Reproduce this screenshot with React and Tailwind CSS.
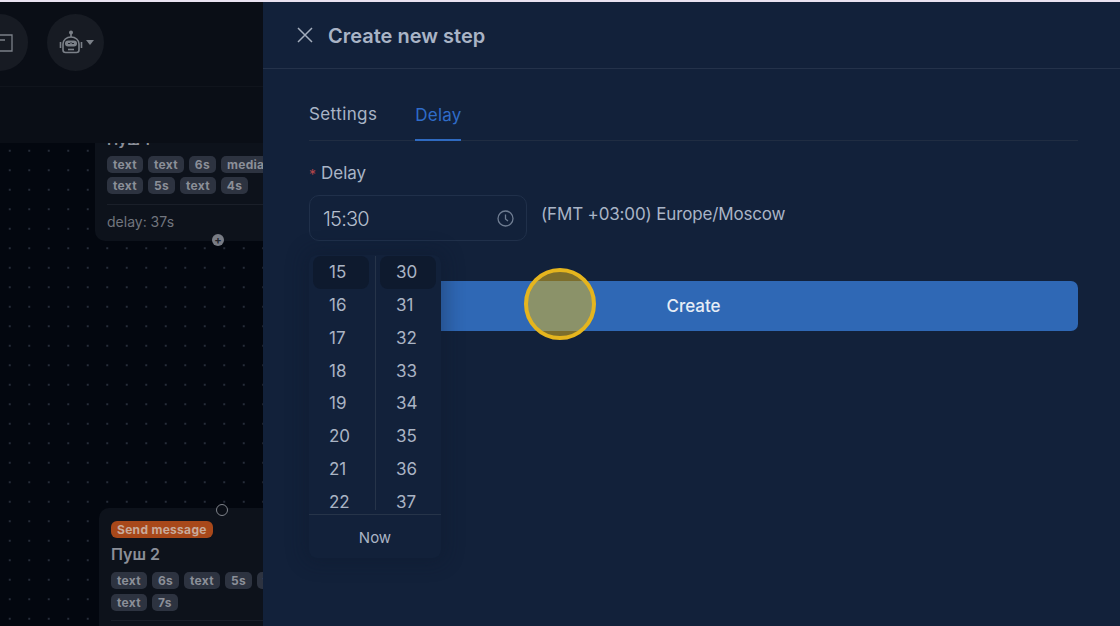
const hours = ['15', '16', '17', '18', '19', '20', '21', '22'];
const minutes = ['30', '31', '32', '33', '34', '35', '36', '37'];

const Tag = ({ children }) => (
  <span className="h-[17px] px-[6px] flex items-center rounded-[5px] bg-[#2d3340] text-[12px] font-bold tracking-[0.3px] text-[#8b8f98] whitespace-nowrap">
    {children}
  </span>
);

const RobotIcon = () => (
  <svg width="26" height="26" viewBox="0 0 26 26" fill="none" stroke="#7b8088" strokeWidth="1.6">
    <circle cx="13" cy="2.500" r="1.200" fill="#7b8088" />
    <path d="M13 4v3" />
    <path d="M5 14c0-4 3.500-7 8-7s8 3 8 7v6c0 1.500-1 2.500-2.500 2.500h-11C6 22.500 5 21.500 5 20z" />
    <path d="M2.500 12v6M23.500 12v6" />
    <rect x="7" y="10.500" width="12" height="6" rx="3" fill="#7b8088" stroke="none" />
    <path d="M10 13.500h2l1 -1 1 1h2" stroke="#20242d" strokeWidth="1" />
    <path d="M10 19.500h6" />
  </svg>
);

const Canvas = () => (
  <div className="w-[263px] shrink-0 relative overflow-hidden bg-[#03070f] flex flex-col">
    <div className="h-[85px] shrink-0 flex items-center gap-[19px] -ml-[28px] pb-[3px] bg-[#0a0e16] border-b border-[#10141c] relative z-10">
      <div className="w-[56px] h-[57px] rounded-full bg-[#171b23] flex items-center justify-end pr-[15px]">
        <svg width="13" height="18" viewBox="0 0 13 18" fill="none" stroke="#7b8088" strokeWidth="1.300">
          <path d="M-4 1h16v16H-4M-1 6h6" />
        </svg>
      </div>
      <div className="w-[57px] h-[57px] rounded-full bg-[#171b23] flex items-center justify-center gap-[2px]">
        <RobotIcon />
        <svg width="8" height="6" viewBox="0 0 8 6"><path d="M0 0h8L4 5z" fill="#7b8088" /></svg>
      </div>
    </div>
    <div className="h-[56px] shrink-0 bg-[#0a0e16] relative z-10" />
    <div className="flex-1 bg-[radial-gradient(circle,#262d3a_0.8px,transparent_1px)] bg-[size:19.500px_19.500px] bg-[position:0px_-2px]" />

    {/* nodes on the canvas */}
    <div className="absolute left-[95px] top-[119px] w-[200px] h-[120px] rounded-[10px] bg-[#0d121b] pl-[12px] pt-[9px]">
      <div className="text-[15px] font-semibold text-[#8b8f98] leading-[20px]">Пуш 1</div>
      <div className="flex gap-[5px] mt-[6px]">
        <Tag>text</Tag><Tag>text</Tag><Tag>6s</Tag><Tag>media</Tag>
      </div>
      <div className="flex gap-[5px] mt-[4px]">
        <Tag>text</Tag><Tag>5s</Tag><Tag>text</Tag><Tag>4s</Tag>
      </div>
      <div className="border-t border-[#1a1f29] mt-[10px] pt-[6px] text-[14px] text-[#71757e]">delay: 37s</div>
    </div>
    <div className="absolute left-[212px] top-[232px] w-[12px] h-[12px] rounded-full bg-[#787c85] flex items-center justify-center text-[11px] leading-none font-bold text-[#20242d]">+</div>

    <div className="absolute left-[99px] top-[506px] w-[200px] h-[130px] rounded-[10px] bg-[#0d121b] pl-[12px] pt-[13px]">
      <div className="w-fit h-[17px] px-[6px] rounded-[6px] bg-[#a8481a] text-[12px] leading-[17px] font-bold tracking-[0.3px] text-[#c9ab9c]">Send message</div>
      <div className="text-[16px] font-semibold text-[#8b8f98] leading-[20px] mt-[6px]">Пуш 2</div>
      <div className="flex gap-[5px] mt-[8px]">
        <Tag>text</Tag><Tag>6s</Tag><Tag>text</Tag><Tag>5s</Tag><Tag>text</Tag>
      </div>
      <div className="flex gap-[5px] mt-[5px]">
        <Tag>text</Tag><Tag>7s</Tag>
      </div>
      <div className="border-t border-[#1a1f29] mt-[9px]" />
    </div>
    <div className="absolute left-[216px] top-[502px] w-[12px] h-[12px] rounded-full border border-[#80848c] bg-[#0a0e16]" />
  </div>
);

const TimeColumn = ({ items, className }) => (
  <div className={`flex-1 h-[254px] overflow-hidden ${className}`}>
    {items.map((item, i) => (
      <div
        key={item}
        className={`h-[32.800px] shrink-0 flex items-center pl-[16px] pt-[1px] text-[17px] text-[#aab4c4] rounded-[8px] ${i === 0 ? 'bg-[#0e1a2e]' : ''}`}
      >
        {item}
      </div>
    ))}
  </div>
);

const TimePopup = () => (
  <div className="absolute left-[46px] top-[253px] w-[132px] h-[303px] rounded-[8px] bg-[#12213a] shadow-[0_0_18px_6px_rgba(12,24,44,0.3)] flex flex-col">
    <div className="flex pt-[1px] h-[259px]">
      <TimeColumn items={hours} className="pl-[4px] pr-[6px]" />
      <div className="w-px h-[254px] bg-[#263449] shrink-0" />
      <TimeColumn items={minutes} className="pl-[4px] pr-[5px]" />
    </div>
    <div className="flex-1 border-t border-[#263449] flex items-center justify-center pt-[4px] text-[15px] text-[#aab4c4]">Now</div>
  </div>
);

const Panel = () => (
  <div className="flex-1 relative bg-[#12213a] flex flex-col">
    <div className="h-[67px] shrink-0 flex items-center pl-[34px] border-b border-[#24324a]">
      <svg width="16" height="16" viewBox="0 0 16 16" stroke="#a3adbc" strokeWidth="1.500" fill="none">
        <path d="M1 1l14 14M15 1L1 15" />
      </svg>
      <h2 className="ml-[15px] pt-[2px] text-[20px] font-semibold text-[#a9b4c6]">Create new step</h2>
    </div>
    <div className="pl-[46px] pr-[42px]">
      <div className="flex gap-[38px] h-[72px] items-end border-b border-[#202d42]">
        <div className="h-[38px] text-[17px] tracking-[0.4px] text-[#a9b4c6]">Settings</div>
        <div className="h-[38px] -mb-px text-[17px] tracking-[0.2px] text-[#2f6cc8] border-b-2 border-[#2f6ac0]">Delay</div>
      </div>
      <div className="mt-[22px] h-[22px] flex items-center text-[17px] text-[#a9b4c6]">
        <span className="text-[#b5464a] text-[14px] mr-[5px]">*</span>Delay
      </div>
      <div className="flex mt-[10px]">
        <div className="w-[218px] h-[46px] rounded-[10px] border border-[#20304a] flex items-center justify-between pl-[13px] pr-[12px]">
          <span className="pt-[1px] text-[20px] font-light tracking-[-0.8px] text-[#b4becd]">15:30</span>
          <svg width="17" height="17" viewBox="0 0 17 17" fill="none" stroke="#6f7d92" strokeWidth="1.300">
            <circle cx="8.500" cy="8.500" r="7.500" />
            <path d="M8.500 4.500v4.500l2.500 2" />
          </svg>
        </div>
        <div className="ml-[14px] h-[38px] pt-[1px] flex items-center text-[17px] tracking-[-0.15px] text-[#a9b4c6]">(FMT +03:00) Europe/Moscow</div>
      </div>
      <button className="mt-[40px] w-full h-[50px] pt-[1px] rounded-[7px] bg-[#2f68b5] text-[17px] font-medium text-[#e6edf6] flex items-center justify-center">
        Create
      </button>
    </div>
    <TimePopup />
  </div>
);

export default function App() {
  return (
    <div className="w-[1120px] h-[626px] overflow-hidden relative flex flex-col font-['Inter',sans-serif]">
      <div className="h-[2px] shrink-0 bg-[#e9e2f0]" />
      <div className="flex-1 flex min-h-0">
        <Canvas />
        <Panel />
      </div>
      <div className="absolute left-[524px] top-[268px] w-[72px] h-[72px] rounded-full border-[4px] border-[#e5b51e] bg-[#e8bc1e]/50" />
    </div>
  );
}
